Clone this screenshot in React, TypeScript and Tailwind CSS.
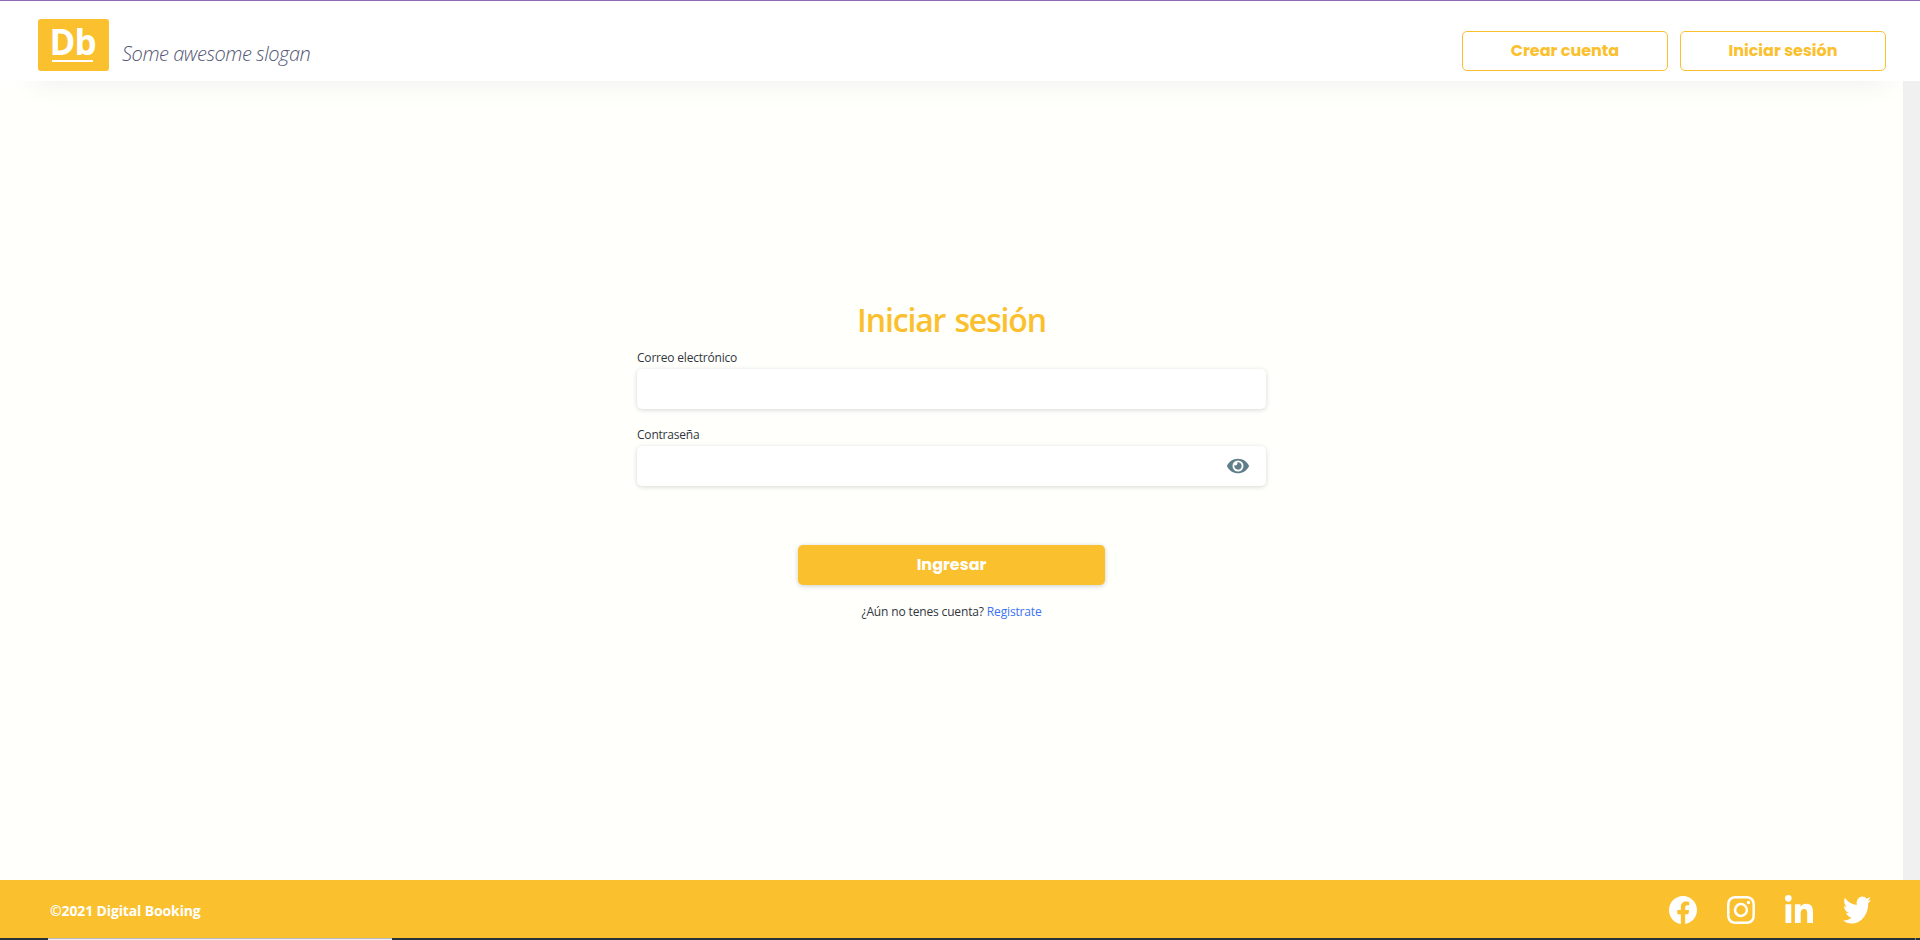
import React from "react";
import { FaEye, FaLinkedinIn, FaTwitter } from "react-icons/fa";
import { BsFacebook, BsInstagram } from "react-icons/bs";

const outlineButton =
  "flex h-10 w-[206px] items-center justify-center rounded-[5px] border border-[#fbc02d] font-['Poppins','Inter',sans-serif] text-[16px] font-bold text-[#fbc02d]";
const field =
  "h-10 w-full rounded-[5px] bg-white shadow-[0_1px_5px_rgba(0,0,0,0.16)] outline-none";
const label = "block h-[22px] text-[12px] leading-[22px] tracking-[-0.2px]";

function Header() {
  return (
    <header className="relative z-10 flex h-[81px] shrink-0 items-start justify-between border-t border-[#8e6bb5] bg-white pr-[34px] pl-[38px] shadow-[0_32px_30px_-32px_rgba(0,0,0,0.09)]">
      <div className="flex pt-[18px]">
        <div className="flex h-[52px] w-[71px] flex-col items-center rounded-[3px] bg-[#fbc02d]">
          <span className="mr-[2px] h-[41px] text-[35px] leading-[45px] font-bold tracking-[-1px] text-white">Db</span>
          <span className="mr-[2px] h-[2px] w-[41px] bg-white" />
        </div>
        <span className="mt-[20px] ml-[13px] text-[20px] leading-[30px] font-light tracking-[-0.45px] whitespace-nowrap text-[#545776] italic">
          Some awesome slogan
        </span>
      </div>
      <nav className="flex gap-3 pt-[30px]">
        <button className={outlineButton}>Crear cuenta</button>
        <button className={outlineButton}>Iniciar sesión</button>
      </nav>
    </header>
  );
}

function LoginForm() {
  return (
    <form className="flex w-[629px] flex-col items-center pt-[216px] text-[#31363f]">
      <h1 className="h-[50px] text-[32px] leading-[46px] font-semibold tracking-[-1.15px] [word-spacing:2px] whitespace-nowrap text-[#fbc02d]">
        Iniciar sesión
      </h1>
      <div className="w-full">
        <label htmlFor="email" className={label}>Correo electrónico</label>
        <input id="email" type="email" className={field} />
      </div>
      <div className="mt-[15px] w-full">
        <label htmlFor="password" className={label}>Contraseña</label>
        <div className="flex h-10 items-center justify-end rounded-[5px] bg-white pr-[17px] shadow-[0_1px_5px_rgba(0,0,0,0.16)]">
          <input id="password" type="password" className="h-full min-w-0 flex-1 outline-none" />
          <FaEye size={22} color="#607d8b" />
        </div>
      </div>
      <button
        type="button"
        className="mt-[59px] h-10 w-[307px] rounded-[5px] bg-[#fbc02d] font-['Poppins','Inter',sans-serif] text-[16px] font-bold text-white shadow-[0_1px_5px_rgba(0,0,0,0.2)]"
      >
        Ingresar
      </button>
      <p className="mt-[16px] text-[12px] leading-[22px] tracking-[-0.15px] whitespace-nowrap">
        ¿Aún no tenes cuenta? <a className="text-[#3b72f6]">Registrate</a>
      </p>
    </form>
  );
}

function Footer() {
  return (
    <footer className="flex h-[58px] shrink-0 items-center justify-between bg-[#fbc02d] pt-[2px] pr-[49px] pl-[50px] text-white">
      <span className="text-[14px] font-bold tracking-[-0.13px]">©2021 Digital Booking</span>
      <div className="flex items-center gap-[30px]">
        <BsFacebook size={28} />
        <BsInstagram size={28} />
        <div className="flex w-7 justify-center pt-[2px]">
          <FaLinkedinIn size={32} className="shrink-0" />
        </div>
        <FaTwitter size={28} className="scale-y-[1.18]" />
      </div>
    </footer>
  );
}

export default function App() {
  return (
    <div className="flex h-[940px] w-[1920px] flex-col overflow-hidden bg-[#fffffb] font-['Open_Sans','Noto_Sans',sans-serif]">
      <Header />
      <div className="flex min-h-0 flex-1">
        <main className="flex flex-1 justify-center">
          <LoginForm />
        </main>
        <div className="w-[17px] bg-[#f0f0f0]" />
      </div>
      <Footer />
      <div className="flex h-[2px] shrink-0 bg-[#263238] pl-12">
        <div className="h-full w-[344px] border-t border-[#b8b8b8] bg-[#f0f0f0]" />
        <div className="ml-[1523px] h-full w-px bg-[#7d858a]" />
      </div>
    </div>
  );
}
